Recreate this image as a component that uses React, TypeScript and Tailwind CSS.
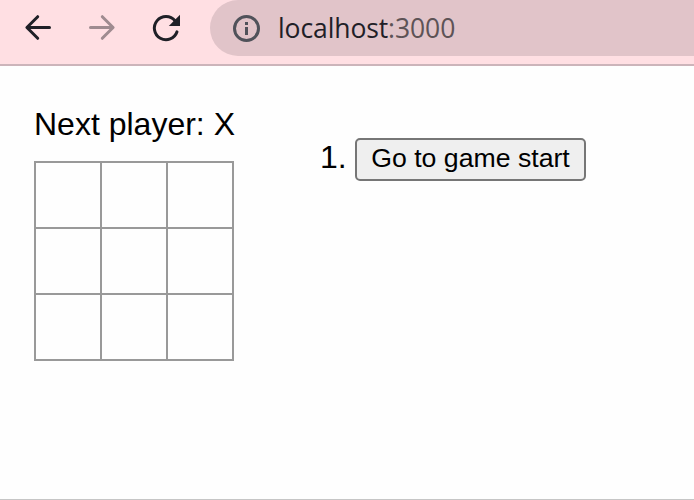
const cells = Array.from({ length: 9 }, (_, i) => i);

function Toolbar() {
  return (
    <header className="flex h-[66px] shrink-0 items-start border-b-2 border-[#ccb4ba] bg-[#ffdfe3]">
      <nav className="flex h-14 w-[210px] shrink-0 items-center gap-8 pl-[22px]">
        <svg aria-label="Back" className="size-8 text-[#1f2027]" viewBox="0 0 32 32" fill="none" stroke="currentColor" strokeWidth="3" strokeLinecap="round" strokeLinejoin="round">
          <path d="M27.5 15.5H5.5M15.7 4.7L4.9 15.5L15.7 26.3" />
        </svg>
        <svg aria-label="Forward" className="size-8 text-[#9f8b90]" viewBox="0 0 32 32" fill="none" stroke="currentColor" strokeWidth="3" strokeLinecap="round" strokeLinejoin="round">
          <path d="M4.5 15.5H26.5M16.3 4.7L27.1 15.5L16.3 26.3" />
        </svg>
        <svg aria-label="Reload" className="size-8 text-[#1f2027]" viewBox="0 0 32 32" fill="none">
          <path d="M27 19.8A11.6 11.6 0 1 1 25 8.8" stroke="currentColor" strokeWidth="3" strokeLinecap="round" />
          <path d="M30 2.8V14H18.8Z" fill="currentColor" />
        </svg>
      </nav>
      <div className="flex h-14 flex-1 items-center rounded-l-full bg-[#e1c4c9] pl-[22px]">
        <svg aria-label="Site information" className="size-7 text-[#50525a]" viewBox="0 0 28 28" fill="none">
          <circle cx="14.5" cy="14.5" r="12" stroke="currentColor" strokeWidth="3" />
          <path d="M13 8h3v3h-3zM13 13h3v8h-3z" fill="currentColor" />
        </svg>
        <p className="ml-[18px] whitespace-nowrap font-['Open_Sans','Noto_Sans',sans-serif] text-[26.5px] leading-9 tracking-[-0.1px] text-[#1f2027]">
          localhost<span className="text-[#5d5356]">:3000</span>
        </p>
      </div>
    </header>
  );
}

export default function App() {
  return (
    <div className="flex h-[500px] w-[694px] flex-col overflow-hidden border-b border-[#c6c6c6] bg-[#fefefe] font-['Liberation_Sans',Arial,sans-serif] text-black">
      <Toolbar />
      <main className="flex items-start pl-[34px]">
        <section className="w-[200px] pt-10">
          <div className="mb-[19px] whitespace-nowrap text-[32px] leading-9">Next player: X</div>
          <div className="grid w-[200px] auto-rows-[66px] grid-cols-[repeat(3,66px)] border-l-2 border-t-2 border-[#999]">
            {cells.map((i) => (
              <button key={i} aria-label={`Square ${i + 1}`} className="border-b-2 border-r-2 border-[#999]" />
            ))}
          </div>
        </section>
        <ol className="ml-[86px] pt-[72px]">
          <li className="flex items-start">
            <span className="w-[35px] text-[32px] leading-[38px]">1.</span>
            <button className="h-[43px] w-[231px] whitespace-nowrap rounded-[5px] border-2 border-[#767676] bg-[#efefef] pb-[3px] text-[26.67px] leading-9">
              Go to game start
            </button>
          </li>
        </ol>
      </main>
    </div>
  );
}
